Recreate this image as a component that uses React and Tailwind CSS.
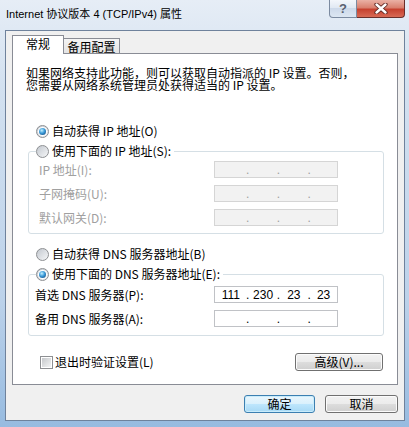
import React from 'react';

// Win7 style "Internet 协议版本 4 (TCP/IPv4) 属性" dialog

function Radio({ checked }) {
  return (
    <span className="flex h-[13px] w-[13px] shrink-0 items-center justify-center rounded-full border border-[#8d8f92] bg-[linear-gradient(135deg,#c3c8cf,#f6f7f8)]">
      {checked && (
        <span className="flex h-[9px] w-[9px] items-center justify-center rounded-full bg-white">
          <span className="h-[7px] w-[7px] rounded-full bg-[radial-gradient(circle_at_40%_35%,#c5f1ff,#3a9ad8_45%,#0d3a6e)]" />
        </span>
      )}
    </span>
  );
}

function Checkbox() {
  return (
    <span className="flex h-[13px] w-[13px] shrink-0 items-center justify-center border border-[#8d8f92] bg-white">
      <span className="h-[9px] w-[9px] bg-[linear-gradient(135deg,#c6c8cb,#f3f4f5)]" />
    </span>
  );
}

function IpBox({ parts, disabled }) {
  const box = disabled
    ? 'border-[#d5d5d5] bg-[#f2f2f2] text-[#a0a0a0]'
    : 'border-[#c0c2c6] bg-white text-black';
  const seg = ['w-[32px]', 'w-[29px]', 'w-[29px]', 'w-[27px]'];
  return (
    <div className={`flex h-[17px] w-[124px] shrink-0 items-center border font-['Liberation_Sans',sans-serif] text-[12px] leading-none ${box}`}>
      {parts.map((p, i) => (
        <React.Fragment key={i}>
          <span className={`${seg[i]} text-center`}>{p}</span>
          {i < 3 && <span className="flex w-[2px] justify-center">.</span>}
        </React.Fragment>
      ))}
    </div>
  );
}

function Field({ label, parts, disabled, dns }) {
  return (
    <div className="flex h-[17px] items-center">
      <span className={`w-[178px] ${dns ? '-ml-[1px] mr-[1px]' : 'pl-[3px]'} ${disabled ? 'text-[#a0a0a0]' : 'text-black'}`}>
        {label}
      </span>
      <IpBox parts={parts} disabled={disabled} />
    </div>
  );
}

function Button({ children, primary, className = '' }) {
  const look = primary
    ? 'border-[#3c7fb1] bg-[linear-gradient(#eaf6fd,#d9f0fc_50%,#bee6fd_50%,#a7d9f5)] shadow-[inset_0_0_0_1px_#c9ecfb]'
    : 'border-[#707070] bg-[linear-gradient(#f2f2f2,#ebebeb_50%,#dddddd_50%,#cfcfcf)] shadow-[inset_0_0_0_1px_#fbfbfb]';
  return (
    <div className={`flex h-[18px] items-center justify-center rounded-[3px] border text-[12px] leading-none text-black ${look} ${className}`}>
      {children}
    </div>
  );
}

export default function App() {
  return (
    <div className="relative h-[427px] w-[409px] overflow-hidden bg-[linear-gradient(#e6edf6,#d3e1f0_20%,#bcd2ea_70%,#97bbe0)] font-['Noto_Sans_CJK_SC',sans-serif] text-[12px]">
      {/* title bar */}
      <div className="flex h-[30px] items-center pl-[6px] pb-[1px] font-['Liberation_Sans','Noto_Sans_CJK_SC',sans-serif] text-[11px] text-black">
        Internet 协议版本 4 (TCP/IPv4) 属性
      </div>

      {/* caption buttons */}
      <div className="absolute right-[4px] top-0 flex h-[18px]">
        <div className="flex w-[28px] items-center justify-center rounded-bl-[4px] border border-t-0 border-[#7b8aa0] bg-[linear-gradient(#f3f6fb,#dfe7f2_50%,#cdd9ea_50%,#dce6f2)] font-['Liberation_Sans',sans-serif] text-[13px] font-bold leading-none text-[#5a6170]">
          ?
        </div>
        <div className="flex w-[48px] items-center justify-center rounded-br-[4px] border border-l-0 border-t-0 border-[#6a2f2a] bg-[linear-gradient(#eab1a5,#d9806f_45%,#c6412f_55%,#d86a55)]">
          <svg width="14" height="11" viewBox="0 0 14 11">
            <path d="M2.5 1.5 L11.5 9.5 M11.5 1.5 L2.5 9.5" stroke="#5b2520" strokeWidth="4.2" strokeLinecap="round" />
            <path d="M2.5 1.5 L11.5 9.5 M11.5 1.5 L2.5 9.5" stroke="#ffffff" strokeWidth="2.4" strokeLinecap="round" />
          </svg>
        </div>
      </div>

      {/* client area */}
      <div className="ml-[5px] mr-[4px] h-[391px] border border-[#6f829c] bg-[#f0f0f0] px-[6px] pt-[4px]">
        {/* tabs */}
        <div className="flex h-[18px] items-end">
          <div className="relative z-10 -mb-[1px] flex h-[19px] w-[52px] items-center justify-center border border-b-0 border-[#898c95] bg-white pb-[2px] text-black">
            常规
          </div>
          <div className="-ml-[1px] flex h-[15px] w-[57px] items-center justify-center border border-b-0 border-[#898c95] bg-[linear-gradient(#f4f4f4,#e4e4e4)] pt-[1px] text-black">
            备用配置
          </div>
        </div>

        {/* panel */}
        <div className="h-[332px] border border-[#898c95] bg-white px-[13px]">
          <p className="mt-[13px] leading-[12px] text-black">
            如果网络支持此功能，则可以获取自动指派的 IP 设置。否则，
            <br />
            您需要从网络系统管理员处获得适当的 IP 设置。
          </p>

          <div className="ml-[10px] mt-[30px] flex h-[20px] items-center gap-[3px] text-black">
            <Radio checked />
            <span>自动获得 IP 地址(O)</span>
          </div>

          <fieldset className="ml-[2px] w-[356px] rounded-[3px] border border-[#d5dfe5] pb-[7px] pl-[7px] pr-0">
            <legend className="flex h-[20px] items-center gap-[3px] pr-[3px] text-black">
              <Radio />
              <span>使用下面的 IP 地址(S):</span>
            </legend>
            <div className="flex flex-col gap-[7px]">
              <Field label="IP 地址(I):" parts={['', '', '', '']} disabled />
              <Field label="子网掩码(U):" parts={['', '', '', '']} disabled />
              <Field label="默认网关(D):" parts={['', '', '', '']} disabled />
            </div>
          </fieldset>

          <div className="ml-[10px] mt-[10px] flex h-[20px] items-center gap-[3px] text-black">
            <Radio />
            <span>自动获得 DNS 服务器地址(B)</span>
          </div>

          <fieldset className="ml-[2px] w-[356px] rounded-[3px] border border-[#d5dfe5] pb-[8px] pl-[7px] pr-0">
            <legend className="flex h-[20px] items-center gap-[3px] pr-[3px] text-black">
              <Radio checked />
              <span>使用下面的 DNS 服务器地址(E):</span>
            </legend>
            <div className="mt-[2px] flex flex-col gap-[7px]">
              <Field label="首选 DNS 服务器(P):" parts={['111', '230', '23', '23']} dns />
              <Field label="备用 DNS 服务器(A):" parts={['', '', '', '']} dns />
            </div>
          </fieldset>

          <div className="mt-[17px] flex h-[18px] items-center">
            <div className="ml-[14px] flex items-center gap-[2px] text-black">
              <Checkbox />
              <span>退出时验证设置(L)</span>
            </div>
            <Button className="ml-auto mr-[1px] w-[88px]">高级(V)...</Button>
          </div>
        </div>

        {/* dialog buttons */}
        <div className="mt-[10px] flex justify-end gap-[10px]">
          <Button primary className="w-[71px]">确定</Button>
          <Button className="w-[73px]">取消</Button>
        </div>
      </div>
    </div>
  );
}
